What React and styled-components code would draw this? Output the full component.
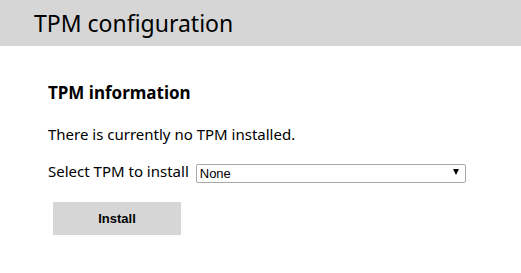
import React from 'react'
import styled, { createGlobalStyle } from 'styled-components'

const GlobalStyle = createGlobalStyle`
  body {
    margin: 0;
    background: #fff;
    font-family: "Noto Sans", "Open Sans", sans-serif;
    color: #000;
  }
`

const Header = styled.div`
  height: 46px;
  background: #d6d6d6;
  padding-left: 34px;
  display: flex;
  align-items: center;
  h1 {
    margin: 0;
    font-size: 23px;
    font-weight: 400;
    line-height: 1;
  }
`

const Content = styled.div`
  padding: 35px 0 0 48px;
  display: flex;
  flex-direction: column;
  align-items: flex-start;
`

const SectionTitle = styled.h2`
  margin: 0 0 18px;
  font-size: 17px;
  font-weight: 700;
  line-height: 24px;
`

const Text = styled.p`
  margin: 0 0 16px;
  font-size: 15px;
  line-height: 22px;
`

const Row = styled.div`
  display: flex;
  align-items: center;
  gap: 7px;
  font-size: 15px;
  line-height: 20px;
`

const SelectWrap = styled.div`
  position: relative;
  width: 270px;
  height: 19px;
`

const Select = styled.select`
  appearance: none;
  width: 100%;
  height: 100%;
  margin: 0;
  padding: 0 0 0 3px;
  border: 1px solid #a9a9a9;
  border-radius: 2px;
  background: #fff;
  font-family: "Liberation Sans", Arial, sans-serif;
  font-size: 13px;
  color: #000;
`

const Arrow = styled.span`
  position: absolute;
  right: 7px;
  top: 7px;
  width: 0;
  height: 0;
  border-left: 3.5px solid transparent;
  border-right: 3.5px solid transparent;
  border-top: 6px solid #000;
  pointer-events: none;
`

const Button = styled.button`
  margin: 21px 0 0 5px;
  width: 128px;
  height: 33px;
  border: none;
  background: #d6d6d6;
  font-family: "Liberation Sans", Arial, sans-serif;
  font-size: 13px;
  font-weight: 700;
  color: #000;
`

export default function App() {
  return (
    <>
      <GlobalStyle />
      <Header>
        <h1>TPM configuration</h1>
      </Header>
      <Content>
        <SectionTitle>TPM information</SectionTitle>
        <Text>There is currently no TPM installed.</Text>
        <Row>
          <span>Select TPM to install</span>
          <SelectWrap>
            <Select defaultValue="none">
              <option value="none">None</option>
            </Select>
            <Arrow />
          </SelectWrap>
        </Row>
        <Button>Install</Button>
      </Content>
    </>
  )
}
